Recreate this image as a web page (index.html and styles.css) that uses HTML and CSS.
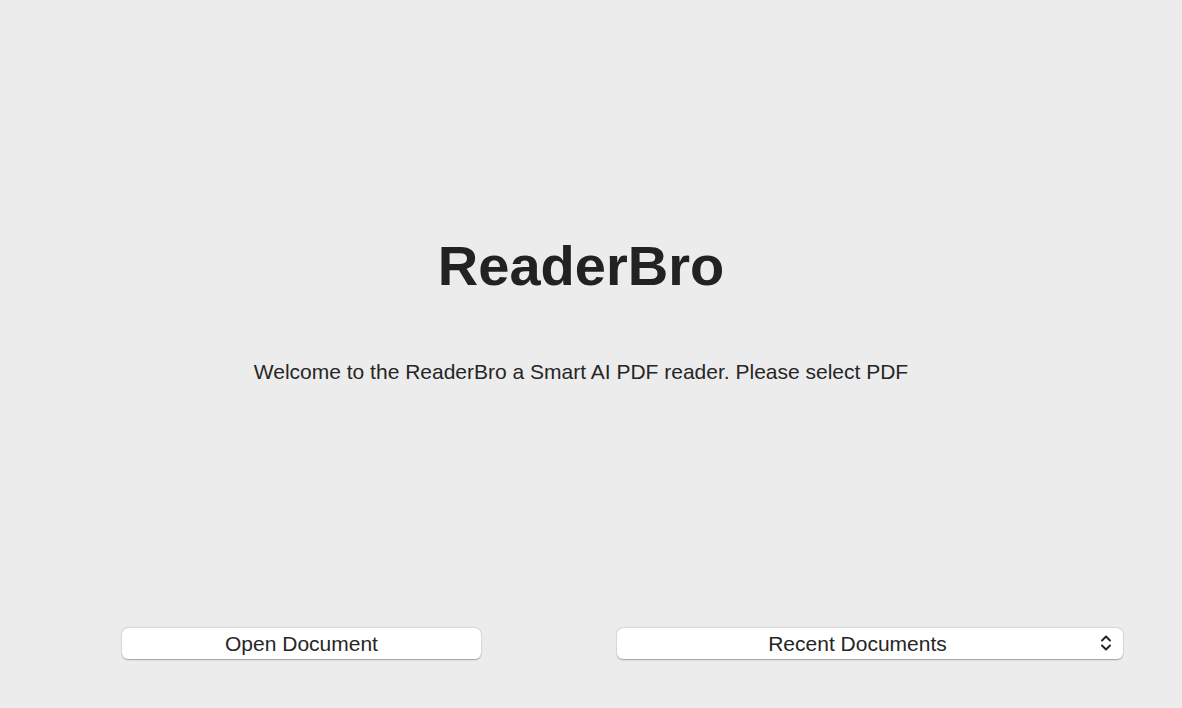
FILE: index.html
```html
<!DOCTYPE html>
<html>
<head>
<meta charset="utf-8">
<link rel="stylesheet" href="styles.css">
</head>
<body>
<div class="window">
  <div class="hero">
    <h1 class="title">ReaderBro</h1>
    <p class="welcome">Welcome to the ReaderBro a Smart AI PDF reader. Please select PDF</p>
  </div>
  <div class="spacer"></div>
  <div class="actions">
    <button class="btn open">Open Document</button>
    <div class="btn select">
      <span class="select-label">Recent Documents</span>
      <svg class="chev" width="12" height="18" viewBox="0 0 12 18">
        <path d="M2 6.5 L6 2.5 L10 6.5" fill="none" stroke="#222" stroke-width="1.9" stroke-linecap="round" stroke-linejoin="round"/>
        <path d="M2 11.5 L6 15.5 L10 11.5" fill="none" stroke="#222" stroke-width="1.9" stroke-linecap="round" stroke-linejoin="round"/>
      </svg>
    </div>
  </div>
</div>
</body>
</html>
```
FILE: styles.css
```css
html, body {
  margin: 0;
  padding: 0;
  background: #ececec;
}
.window {
  width: 1182px;
  height: 708px;
  display: flex;
  flex-direction: column;
  font-family: "Liberation Sans", Arial, sans-serif;
  color: #262626;
  box-sizing: border-box;
}
.hero {
  display: flex;
  flex-direction: column;
  align-items: center;
  padding-right: 20px;
}
.title {
  margin: 232px 0 0 0;
  font-size: 56px;
  line-height: 68px;
  font-weight: 700;
  color: #222;
  letter-spacing: 0;
}
.welcome {
  margin: 59px 0 0 0;
  font-size: 21px;
  line-height: 26px;
  color: #262626;
}
.spacer {
  flex: 1;
}
.actions {
  display: flex;
  gap: 136px;
  padding: 0 59px 49px 122px;
}
.btn {
  height: 31px;
  box-sizing: border-box;
  background: #ffffff;
  border: none;
  border-radius: 6px;
  box-shadow: 0 0.5px 1.5px rgba(0,0,0,0.3), 0 0 0 0.5px rgba(0,0,0,0.06);
  font-family: "Liberation Sans", Arial, sans-serif;
  font-size: 21px;
  color: #262626;
  display: flex;
  align-items: center;
  justify-content: center;
  padding: 0;
}
.open {
  width: 359px;
}
.select {
  width: 506px;
  position: relative;
  padding-right: 25px;
}
.chev {
  position: absolute;
  right: 11px;
  top: 6px;
}
```
